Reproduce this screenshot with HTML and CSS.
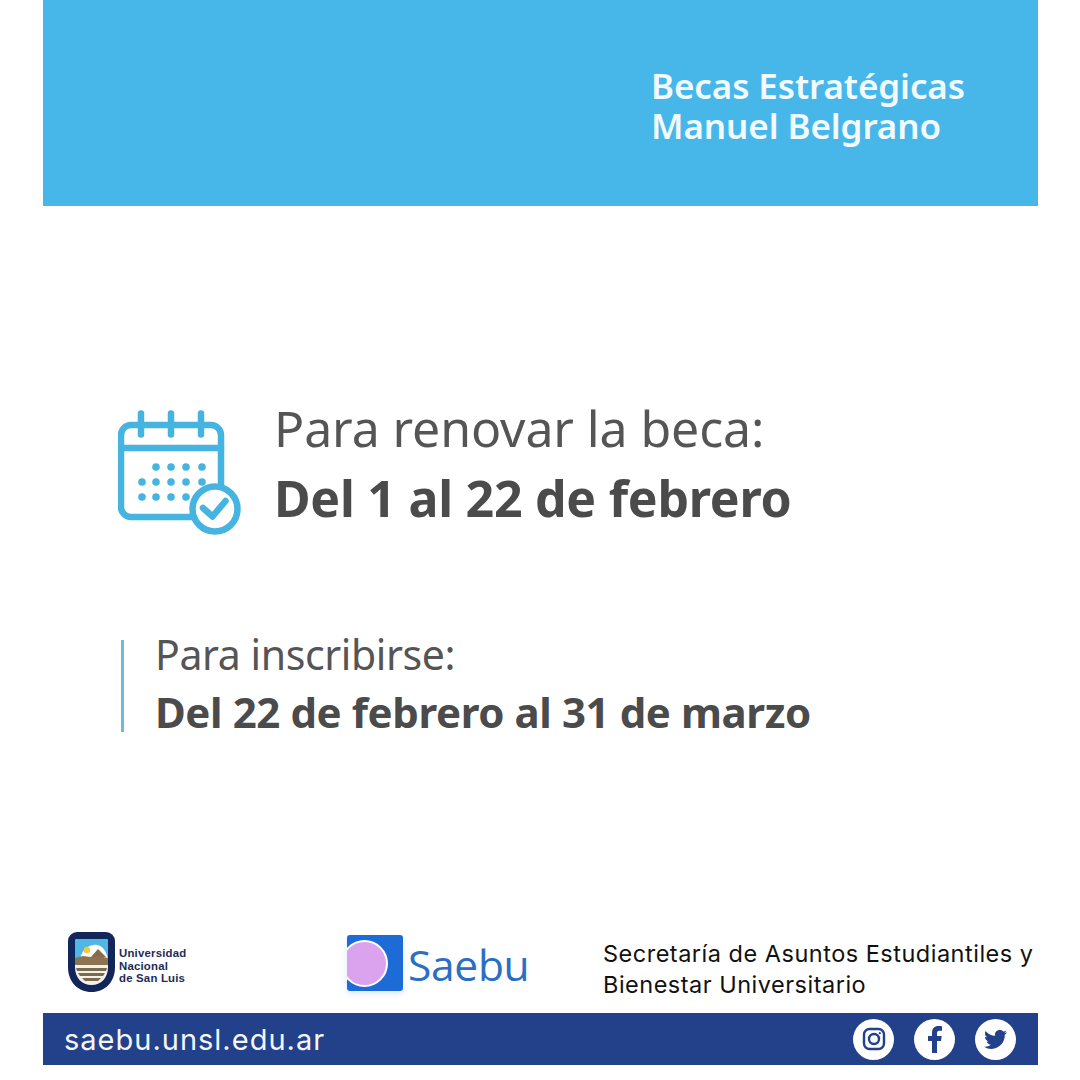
FILE: index.html
```html
<!DOCTYPE html>
<html lang="es">
<head>
<meta charset="utf-8">
<title>Becas Estratégicas Manuel Belgrano</title>
<link rel="stylesheet" href="styles.css">
</head>
<body>
<div class="page">
  <header class="header">
    <h1 class="title">Becas Estratégicas<br>Manuel Belgrano</h1>
  </header>
  <main class="main">
    <section class="renew">
      <svg class="cal" viewBox="0 0 124 128" width="124" height="128" aria-hidden="true">
        <g fill="none" stroke="#45b4e0" stroke-width="6.500" stroke-linecap="round" stroke-linejoin="round">
          <path d="M84 107H13a10 10 0 0 1-10-10V25a10 10 0 0 1 10-10h80a10 10 0 0 1 10 10v50"/>
          <path d="M3 38h100"/>
          <path d="M23 3.500v21M53 3.500v21M83 3.500v21"/>
        </g>
        <g fill="#45b4e0">
          <circle cx="38" cy="57" r="3.800"/><circle cx="53" cy="57" r="3.800"/><circle cx="68" cy="57" r="3.800"/><circle cx="84" cy="57" r="3.800"/>
          <circle cx="24" cy="72" r="3.800"/><circle cx="38" cy="72" r="3.800"/><circle cx="53" cy="72" r="3.800"/><circle cx="68" cy="72" r="3.800"/><circle cx="84" cy="72" r="3.800"/>
          <circle cx="24" cy="87" r="3.800"/><circle cx="38" cy="87" r="3.800"/><circle cx="53" cy="87" r="3.800"/><circle cx="68" cy="87" r="3.800"/>
        </g>
        <circle cx="97" cy="99" r="22.500" fill="#fff" stroke="#45b4e0" stroke-width="6.500"/>
        <path d="M85 98l9.500 8.500 13-15.500" fill="none" stroke="#45b4e0" stroke-width="6.500" stroke-linecap="round" stroke-linejoin="round"/>
      </svg>
      <div class="renew-text">
        <p class="lead">Para renovar la beca:</p>
        <p class="strong">Del 1 al 22 de febrero</p>
      </div>
    </section>
    <section class="enroll">
      <p class="lead-sm">Para inscribirse:</p>
      <p class="strong-sm">Del 22 de febrero al 31 de marzo</p>
    </section>
  </main>
  <section class="logos">
    <div class="unsl">
      <svg class="shield" viewBox="0 0 47 60" width="47" height="60" aria-hidden="true">
        <path d="M9 0h29a9 9 0 0 1 9 9v26c0 15-10 25-23.500 25S0 50 0 35V9a9 9 0 0 1 9-9z" fill="#12265c"/>
        <path d="M9 7h29a2 2 0 0 1 2 2v26c0 11-7 18-16.500 18S7 46 7 35V9a2 2 0 0 1 2-2z" fill="#f4f1e8"/>
        <path d="M7 9a2 2 0 0 1 2-2h29a2 2 0 0 1 2 2v17H7z" fill="#4fb6e6"/>
        <path d="M12 27c2-10 10-15 17-14 6 1 9 6 11 14z" fill="#fff"/>
        <circle cx="19" cy="18" r="3.300" fill="#f4c93c"/>
        <path d="M23 25l7-8 8 8z" fill="#8a6a4a"/>
        <path d="M7 26l8-2 8 1 8-1 9 2v7H7z" fill="#8d7350"/>
        <path d="M8 36h31l-1 3H9zM10 41h27l-2 3H12zM14 46h19l-3 3H17z" fill="#7a6a4f"/>
      </svg>
      <p class="unsl-name">Universidad<br>Nacional<br>de San Luis</p>
    </div>
    <div class="saebu">
      <div class="saebu-mark"><span class="saebu-dot"></span></div>
      <span class="saebu-name">Saebu</span>
    </div>
    <p class="office">Secretaría de Asuntos Estudiantiles y<br>Bienestar Universitario</p>
  </section>
  <footer class="bar">
    <span class="url">saebu.unsl.edu.ar</span>
    <div class="social">
      <span class="social-btn">
        <svg viewBox="0 0 28 28" width="28" height="28" aria-hidden="true" fill="none" stroke="#23408a" stroke-width="2.400"><rect x="4" y="4" width="20" height="20" rx="5.500"/><circle cx="14" cy="14" r="5"/><circle cx="19.800" cy="8.200" r="1.100" fill="#23408a" stroke="none"/></svg>
      </span>
      <span class="social-btn">
        <svg viewBox="0 0 28 28" width="28" height="28" aria-hidden="true"><path d="M11 28V16H7v-5h4V8c0-4.600 2.500-7 6.500-7 1.500 0 2.800.1 3.500.2v4.500h-2.500c-2 0-2.500 1-2.500 2.500V11h4.700l-.7 5h-4v12z" fill="#23408a"/></svg>
      </span>
      <span class="social-btn">
        <svg viewBox="0 0 24 24" width="25" height="25" aria-hidden="true"><path d="M23 5.100c-.8.400-1.700.6-2.600.7.900-.6 1.600-1.400 2-2.500-.9.500-1.800.9-2.900 1.100A4.500 4.500 0 0 0 11.700 8.500C8 8.300 4.700 6.500 2.500 3.800c-1.200 2.100-.6 4.800 1.400 6.100-.7 0-1.400-.2-2-.6 0 2.200 1.500 4.100 3.600 4.500-.7.200-1.400.2-2 .1.600 1.800 2.300 3.100 4.200 3.100A9.100 9.100 0 0 1 1 18.900 12.800 12.800 0 0 0 8 21c8.400 0 13.200-7.100 12.900-13.500.9-.6 1.600-1.400 2.100-2.400z" fill="#23408a"/></svg>
      </span>
    </div>
  </footer>
</div>
</body>
</html>
```

FILE: styles.css
```css
* { box-sizing: border-box; }
html, body { margin: 0; padding: 0; background: #fff; }
p, h1 { margin: 0; }
.page {
  width: 1080px;
  height: 1080px;
  padding: 0 42px 15px 43px;
  display: flex;
  flex-direction: column;
  font-family: "Noto Sans", "Open Sans", sans-serif;
  color: #4b4b4b;
}
.header {
  height: 206px;
  flex: none;
  background: #47b6e9;
  padding: 66px 0 0 608px;
}
.title {
  font-size: 35px;
  line-height: 40px;
  font-weight: 600;
  color: #f2fafd;
  letter-spacing: -0.1px;
  white-space: nowrap;
}
.main {
  flex: 1;
  padding: 187px 0 0 75px;
  display: flex;
  flex-direction: column;
}
.renew { display: flex; gap: 32px; align-items: flex-start; }
.cal { flex: none; margin-top: 17px; }
.lead { font-size: 50px; line-height: 70px; color: #555; letter-spacing: -0.1px; white-space: nowrap; }
.strong { font-size: 50px; line-height: 70px; font-weight: 700; letter-spacing: -0.25px; white-space: nowrap; }
.enroll {
  margin: 102px 0 0 3px;
  border-left: 3px solid #6cbcd8;
  padding-left: 31px;
  height: 92px;
}
.lead-sm { font-size: 41px; line-height: 57px; margin-top: -14px; color: #555; letter-spacing: -0.4px; white-space: nowrap; }
.strong-sm { font-size: 42px; line-height: 58px; font-weight: 700; letter-spacing: -0.4px; white-space: nowrap; }
.logos {
  flex: none;
  height: 92px;
  display: flex;
  align-items: flex-start;
  padding-left: 25px;
  color: #111;
}
.unsl { display: flex; align-items: flex-start; gap: 4px; width: 279px; margin-top: 11px; }
.shield { flex: none; }
.unsl-name {
  font-family: "Liberation Sans", Arial, sans-serif;
  font-size: 11.400px;
  line-height: 12.600px;
  margin-top: 15px;
  font-weight: 700;
  color: #1d2b55;
  letter-spacing: 0.2px;
}
.saebu { display: flex; align-items: flex-start; gap: 5px; width: 256px; margin-top: 14px; }
.saebu-mark {
  width: 56px;
  height: 56px;
  background: #1c6bd6;
  border-radius: 3px;
  display: flex;
  align-items: center;
  overflow: hidden;
  flex: none;
  box-shadow: 0 3px 6px rgba(28, 107, 214, 0.15);
}
.saebu-dot {
  width: 47px;
  height: 47px;
  flex: none;
  margin-left: -6px;
  border-radius: 50%;
  background: #dba3ee;
  border: 2.500px solid #fff;
}
.saebu-name {
  font-family: "Open Sans", "Noto Sans", sans-serif;
  font-size: 42.500px;
  line-height: 56px;
  margin-top: 2px;
  color: #2a6fc4;
  letter-spacing: -0.3px;
}
.office {
  font-family: "Inter", "Noto Sans", sans-serif;
  font-size: 23.500px;
  line-height: 31px;
  margin-top: 17px;
  letter-spacing: 0.5px;
  color: #111;
  white-space: nowrap;
}
.bar {
  flex: none;
  height: 52px;
  background: #23408a;
  display: flex;
  align-items: center;
  justify-content: space-between;
  padding: 0 22px 0 21px;
}
.url {
  font-family: "Inter", "Noto Sans", sans-serif;
  font-size: 29px;
  color: #f4f6fb;
  letter-spacing: 1px;
}
.social { display: flex; gap: 20px; }
.social-btn {
  width: 41px;
  height: 41px;
  border-radius: 50%;
  background: #fff;
  display: flex;
  align-items: center;
  justify-content: center;
}
```
